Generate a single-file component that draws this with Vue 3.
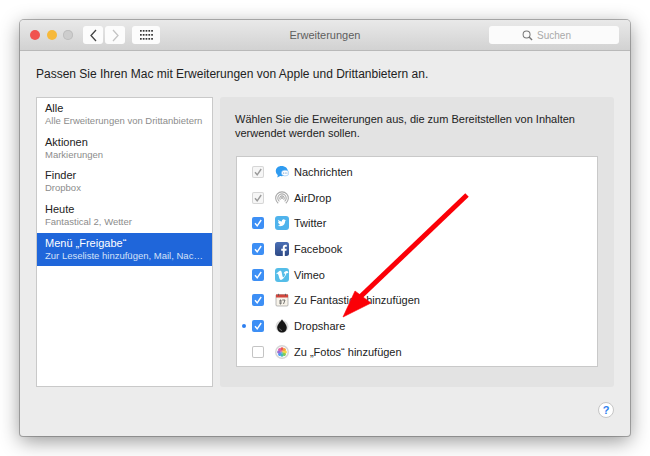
<script setup>
const sidebar = [
  { t: 'Alle', s: 'Alle Erweiterungen von Drittanbietern' },
  { t: 'Aktionen', s: 'Markierungen' },
  { t: 'Finder', s: 'Dropbox' },
  { t: 'Heute', s: 'Fantastical 2, Wetter' },
  { t: 'Menü „Freigabe“', s: 'Zur Leseliste hinzufügen, Mail, Nac…', sel: true },
]
const rows = [
  { k: 'msg', t: 'Nachrichten', c: 'dis' },
  { k: 'air', t: 'AirDrop', c: 'dis' },
  { k: 'tw', t: 'Twitter', c: 'on' },
  { k: 'fb', t: 'Facebook', c: 'on' },
  { k: 'vi', t: 'Vimeo', c: 'on' },
  { k: 'fa', t: 'Zu Fantastical hinzufügen', c: 'on' },
  { k: 'dr', t: 'Dropshare', c: 'on', dot: true },
  { k: 'fo', t: 'Zu „Fotos“ hinzufügen', c: 'off' },
]
const petals = ['#e8423f', '#f39a2d', '#f6d32f', '#79c843', '#35b6a6', '#3d8ff5', '#8a5fd0', '#d9509c']
</script>

<template>
  <div class="page">
    <div class="window">
      <header class="titlebar">
        <div class="lights">
          <span class="light red"></span>
          <span class="light yellow"></span>
          <span class="light grey"></span>
        </div>
        <div class="navs">
          <button class="tb nav">
            <svg width="9" height="13" viewBox="0 0 9 13"><path d="M7 1 2 6.500 7 12" fill="none" stroke="#444" stroke-width="1.300"/></svg>
          </button>
          <button class="tb nav">
            <svg width="9" height="13" viewBox="0 0 9 13"><path d="M2 1 7 6.500 2 12" fill="none" stroke="#c4c4c4" stroke-width="1.300"/></svg>
          </button>
        </div>
        <button class="tb grid">
          <svg width="13" height="10" viewBox="0 0 13 10" fill="#333">
            <template v-for="y in [0, 4, 8]" :key="y">
              <rect v-for="x in [0, 2.800, 5.600, 8.400, 11.200]" :key="x" :x="x" :y="y" width="1.700" height="1.700"/>
            </template>
          </svg>
        </button>
        <div class="wintitle">Erweiterungen</div>
        <div class="search">
          <svg width="11" height="11" viewBox="0 0 12 12"><circle cx="5" cy="5" r="3.800" fill="none" stroke="#777" stroke-width="1.100"/><path d="M7.700 7.700 11 11" stroke="#777" stroke-width="1.500"/></svg>
          <span>Suchen</span>
        </div>
      </header>

      <main class="content">
        <p class="lead">Passen Sie Ihren Mac mit Erweiterungen von Apple und Drittanbietern an.</p>
        <div class="columns">
          <aside class="sidebar">
            <div v-for="i in sidebar" :key="i.t" class="sitem" :class="{ sel: i.sel }">
              <div class="st">{{ i.t }}</div>
              <div class="ss">{{ i.s }}</div>
            </div>
          </aside>
          <section class="panel">
            <p class="desc">Wählen Sie die Erweiterungen aus, die zum Bereitstellen von Inhalten<br>verwendet werden sollen.</p>
            <div class="list">
              <div v-for="r in rows" :key="r.k" class="row">
                <span class="dot" :class="{ show: r.dot }"></span>
                <span class="check" :class="r.c">
                  <svg v-if="r.c !== 'off'" width="12" height="12" viewBox="0 0 12 12"><path d="M3 6.200 5.200 8.800 9.200 3" fill="none" :stroke="r.c === 'on' ? '#fff' : '#9a9a9a'" stroke-width="1.400"/></svg>
                </span>
                <svg class="icon" width="14" height="14" viewBox="0 0 14 14">
                  <defs>
                    <linearGradient id="fbg" x1="0" y1="0" x2="0" y2="1"><stop offset="0" stop-color="#4a6fb5"/><stop offset="1" stop-color="#2f4a86"/></linearGradient>
                  </defs>
                  <template v-if="r.k === 'msg'">
                    <path d="M6.500 1C3 1 .8 3.200.8 6c0 1.600.7 3 2 3.900L2.300 12.500l2.900-1.400c.5.100.9.100 1.300.1 1 0 1.900-.2 2.600-.6L9 7.500l4-.8C13 3.400 10.300 1 6.500 1Z" fill="#2f9bf0"/>
                    <rect x="6.500" y="5.200" width="7.300" height="5.600" rx="2.800" fill="#fff" stroke="#7fbef5" stroke-width=".6"/>
                    <circle cx="8.500" cy="8" r=".6" fill="#5a8fc8"/><circle cx="10.200" cy="8" r=".6" fill="#5a8fc8"/><circle cx="11.900" cy="8" r=".6" fill="#5a8fc8"/>
                  </template>
                  <template v-else-if="r.k === 'air'">
                    <g fill="none" stroke="#a8a8a8" stroke-width="1.100">
                      <path d="M3.200 12.200a6.300 6.300 0 1 1 7.600 0"/>
                      <path d="M4.400 10.400a4.200 4.200 0 1 1 5.200 0"/>
                      <path d="M5.500 8.700a2.200 2.200 0 1 1 3 0"/>
                    </g>
                    <path d="M7 7.200 10 13H4Z" fill="#fff"/>
                    <circle cx="7" cy="7" r="1" fill="#a8a8a8"/>
                  </template>
                  <template v-else-if="r.k === 'tw'">
                    <rect width="14" height="14" rx="3" fill="#4fb3ec"/>
                    <path d="M11.300 4.300c-.3.200-.7.300-1 .3.400-.2.600-.5.800-.9-.3.200-.7.300-1.100.4a1.700 1.700 0 0 0-3 1.500C5.500 5.500 4.200 4.800 3.400 3.800c-.5.800-.2 1.800.5 2.300-.3 0-.5-.1-.8-.2 0 .8.600 1.500 1.400 1.700-.3.100-.5.100-.8 0 .2.700.9 1.200 1.600 1.200-.8.600-1.600.9-2.600.8 2.600 1.500 7.500.6 7.500-4.800.4-.1.800-.5 1.100-.8Z" fill="#fff"/>
                  </template>
                  <template v-else-if="r.k === 'fb'">
                    <rect width="14" height="14" rx="2.500" fill="url(#fbg)"/>
                    <path d="M9.800 14V8.800h1.600l.3-2H9.800V5.700c0-.6.200-1 1-1h1V2.900c-.2 0-.8-.1-1.500-.1-1.500 0-2.500.9-2.500 2.600v1.400H6.200v2h1.600V14Z" fill="#fff"/>
                  </template>
                  <template v-else-if="r.k === 'vi'">
                    <rect width="14" height="14" rx="3" fill="#55bde8"/>
                    <path d="M11.700 4.700c0 1-.8 2.500-2.200 4.300C8 10.900 6.800 11.800 5.800 11.800c-.6 0-1.200-.6-1.600-1.700L3.300 6.900c-.3-1.100-.7-1.700-1-1.700l-.8.500L1 5.100l2-1.800c.9-.8 1.600-1.200 2-1.200 1-.1 1.500.6 1.800 2 .3 1.600.5 2.500.6 2.900.3 1.300.6 2 1 2 .3 0 .7-.4 1.200-1.200.5-.8.800-1.400.8-1.900.1-.7-.2-1-.8-1-.3 0-.6.100-.9.200.6-1.900 1.700-2.800 3.300-2.800 1.200.1 1.800.8 1.700 2.300Z" transform="translate(.4 .8) scale(.94)" fill="#fff"/>
                  </template>
                  <template v-else-if="r.k === 'fa'">
                    <rect x="1" y="1.500" width="12" height="11.500" rx="1" fill="#f7f3ea" stroke="#8d8d8d" stroke-width=".6"/>
                    <rect x="1" y="1.500" width="12" height="3" fill="#d2453c"/>
                    <path d="M3.500.8v2M10.500.8v2" stroke="#555" stroke-width=".8"/>
                    <path d="M5 7h1v4H5Zm2.200 0H10L8.500 11" fill="none" stroke="#555" stroke-width=".8"/>
                  </template>
                  <template v-else-if="r.k === 'dr'">
                    <circle cx="7" cy="7.500" r="6.500" fill="#dcdcdc"/>
                    <path d="M7 .3C5.600 2.800 2.200 5.200 2.200 8.800a4.800 4.800 0 0 0 9.600 0C11.800 5.200 8.400 2.800 7 .3Z" fill="#151515"/>
                    <path d="M4.600 9.500c.3 1.200 1.200 1.900 2.400 2" fill="none" stroke="#888" stroke-width=".8"/>
                  </template>
                  <template v-else>
                    <circle cx="7" cy="7" r="7" fill="#d6d6d6"/>
                    <circle cx="7" cy="7" r="5.500" fill="#fff"/>
                    <path v-for="(c, n) in petals" :key="c" d="M7 7 5.300 3.200a1.900 1.900 0 0 1 3.400 0Z" :fill="c" opacity=".9" :transform="`rotate(${n * 45} 7 7)`"/>
                  </template>
                </svg>
                <span class="rt">{{ r.t }}</span>
              </div>
            </div>
          </section>
        </div>
        <div class="footer">
          <button class="help">?</button>
        </div>
      </main>
    </div>

    <svg class="arrow" width="650" height="456" viewBox="0 0 650 456">
      <path d="M467 195 358 299" stroke="#fb0007" stroke-width="5" fill="none"/>
      <path d="M343 317 355 291 371 303Z" fill="#fb0007" stroke="#fb0007" stroke-width=".6"/>
    </svg>
  </div>
</template>

<style>
html, body { margin: 0; background: #fff; }
</style>

<style scoped>
.page {
  position: relative;
  width: 650px;
  height: 456px;
  padding: 20px;
  box-sizing: border-box;
  overflow: hidden;
  font-family: "Liberation Sans", Arial, sans-serif;
}
.window {
  width: 610px;
  height: 416px;
  border-radius: 4px 4px 3px 3px;
  background: #ececec;
  box-shadow: 0 0 0 1px rgba(90, 90, 90, .45), 0 5px 20px rgba(0, 0, 0, .42);
  display: flex;
  flex-direction: column;
  overflow: hidden;
}
.titlebar {
  height: 31px;
  flex: none;
  box-sizing: border-box;
  display: flex;
  align-items: center;
  padding: 0 11px 0 10px;
  background: linear-gradient(#e9e9e9, #d2d2d2);
  border-bottom: 1px solid #b9b9b9;
  position: relative;
}
.lights { display: flex; gap: 6.500px; width: 53px; }
.light { width: 10px; height: 10px; border-radius: 50%; }
.red { background: #f0544f; }
.yellow { background: #f7b93b; }
.grey { background: #cdcdcd; box-shadow: inset 0 0 0 1px #bdbdbd; }
.tb {
  height: 18px;
  border: 0;
  padding: 0;
  border-radius: 3px;
  background: #fcfcfc;
  display: flex;
  align-items: center;
  justify-content: center;
}
.navs { display: flex; gap: 2px; }
.nav { width: 20px; }
.grid { width: 28px; margin-left: 7px; }
.wintitle {
  position: absolute;
  left: 0;
  right: 0;
  top: 9px;
  text-align: center;
  font-size: 11px;
  line-height: 13px;
  color: #5e5e5e;
}
.search {
  margin-left: auto;
  width: 130px;
  height: 18px;
  box-sizing: border-box;
  padding-right: 15px;
  border-radius: 3px;
  background: #fbfbfb;
  display: flex;
  align-items: center;
  justify-content: center;
  gap: 4px;
  font-size: 10px;
  color: #a9a9a9;
}
.content {
  flex: 1;
  padding: 17px 16px 0;
  display: flex;
  flex-direction: column;
}
.lead {
  margin: 0 0 16px;
  height: 13px;
  line-height: 13px;
  font-size: 12px;
  color: #222;
}
.columns { display: flex; gap: 7px; height: 290px; }
.sidebar {
  width: 177px;
  box-sizing: border-box;
  background: #fff;
  border: 1px solid #c9c9c9;
}
.sitem {
  height: 33.700px;
  box-sizing: border-box;
  padding: 4px 0 0 8px;
  color: #222;
}
.st { font-size: 11px; line-height: 13px; }
.ss { font-size: 9.500px; line-height: 12px; color: #8c8c8c; white-space: nowrap; }
.sel { background: #1f66da; color: #fff; }
.sel .st { color: #fff; }
.sel .ss { color: #d3e1f8; }
.panel {
  width: 394px;
  box-sizing: border-box;
  background: #e3e3e3;
  border-radius: 3px;
  padding: 15px 16px 20px;
  display: flex;
  flex-direction: column;
}
.desc {
  margin: 0 0 16px -1px;
  font-size: 11px;
  line-height: 14px;
  color: #222;
  white-space: nowrap;
}
.list {
  height: 211px;
  box-sizing: border-box;
  background: #fff;
  border: 1px solid #c9c9c9;
  padding-top: 2px;
}
.row {
  height: 25.700px;
  display: flex;
  align-items: center;
  position: relative;
}
.dot {
  width: 4px;
  height: 4px;
  margin: 0 6px 0 5px;
  border-radius: 50%;
}
.dot.show { background: #2d7ff0; }
.check {
  width: 12px;
  height: 12px;
  box-sizing: border-box;
  border-radius: 2px;
  display: block;
  flex: none;
}
.check svg { display: block; }
.check.on { background: #3d8ff5; }
.check.dis { background: #f6f6f6; box-shadow: inset 0 0 0 1px #d6d6d6; }
.check.off { background: #fff; box-shadow: inset 0 0 0 1px #c4c4c4; }
.icon { margin-left: 11px; flex: none; }
.rt { margin-left: 5px; font-size: 11px; color: #222; }
.footer { flex: 1; display: flex; justify-content: flex-end; padding: 15px 0 0; }
.help {
  width: 16px;
  height: 16px;
  padding: 0;
  margin-right: 0;
  border: 1px solid #c6c6c6;
  border-radius: 50%;
  background: #fff;
  color: #2f80ee;
  font: bold 11px/14px "Liberation Sans", Arial, sans-serif;
}
.arrow { position: absolute; left: 0; top: 0; pointer-events: none; }
</style>
